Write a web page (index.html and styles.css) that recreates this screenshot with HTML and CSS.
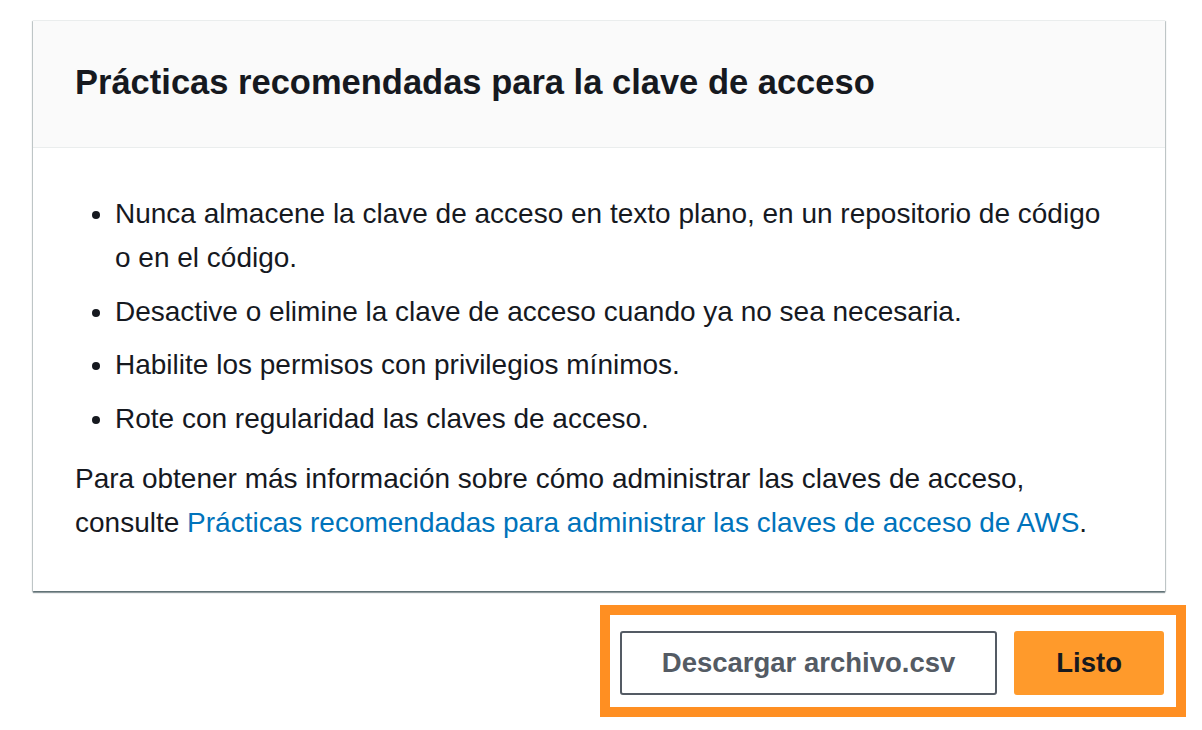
FILE: index.html
```html
<!DOCTYPE html>
<html lang="es">
  <head>
    <meta charset="UTF-8" />
    <meta name="viewport" content="width=device-width, initial-scale=1.0" />
    <title>Clave de acceso</title>
    <link rel="stylesheet" href="styles.css">
  </head>
  <body>
    <div class="page">
      <div class="card">
        <div class="card-header">
          <h2>Prácticas recomendadas para la clave de acceso</h2>
        </div>
        <div class="card-body">
          <ul class="tips">
            <li>Nunca almacene la clave de acceso en texto plano, en un repositorio de código o en el código.</li>
            <li>Desactive o elimine la clave de acceso cuando ya no sea necesaria.</li>
            <li>Habilite los permisos con privilegios mínimos.</li>
            <li>Rote con regularidad las claves de acceso.</li>
          </ul>
          <p>Para obtener más información sobre cómo administrar las claves de acceso, consulte <a href="#">Prácticas recomendadas para administrar las claves de acceso de AWS</a>.</p>
        </div>
      </div>
      <div class="actions">
        <div class="highlight">
          <button class="btn btn-normal">Descargar archivo.csv</button>
          <button class="btn btn-primary">Listo</button>
        </div>
      </div>
    </div>
  </body>
</html>
```

FILE: styles.css
```css
* {
  box-sizing: border-box;
}

body {
  margin: 0;
  background: #ffffff;
  color: #16191f;
  font-family: "Liberation Sans", Arial, sans-serif;
  font-size: 28px;
  line-height: 44px;
}

.page {
  padding: 20px 16px 0 33px;
}

.card {
  margin-right: 21px;
  background: #ffffff;
  border-top: 1px solid #eaeded;
  box-shadow: 0 2px 1px 0 rgba(0, 28, 36, 0.4),
    1px 1px 1px 0 rgba(0, 28, 36, 0.2),
    -1px 1px 1px 0 rgba(0, 28, 36, 0.2);
}

.card-header {
  background: #fafafa;
  border-bottom: 1px solid #eaeded;
  padding: 39px 40px 43px 42px;
}

.card-header h2 {
  margin: 0;
  font-size: 34.5px;
  line-height: 44px;
  font-weight: bold;
}

.card-body {
  padding: 44px 40px 46px 42px;
}

.tips {
  margin: 0 0 16px;
  padding: 0 20px 0 40px;
}

.tips li + li {
  margin-top: 9.5px;
}

.card-body p {
  margin: 0;
}

.card-body a {
  color: #0073bb;
  text-decoration: none;
}

.actions {
  display: flex;
  justify-content: flex-end;
  margin-top: 14px;
}

.highlight {
  display: flex;
  gap: 17px;
  border: 10px solid #ff8f22;
  padding: 16px 12px 12px 10px;
}

.btn {
  font-family: inherit;
  font-size: 27.5px;
  font-weight: bold;
  line-height: 44px;
  padding: 8px 40px;
  border: 2px solid;
  border-radius: 3px;
  cursor: pointer;
}

.btn-normal {
  background: #ffffff;
  border-color: #545b64;
  color: #545b64;
}

.btn-primary {
  background: #ff9a2b;
  border-color: #ff9a2b;
  color: #16191f;
}
```
